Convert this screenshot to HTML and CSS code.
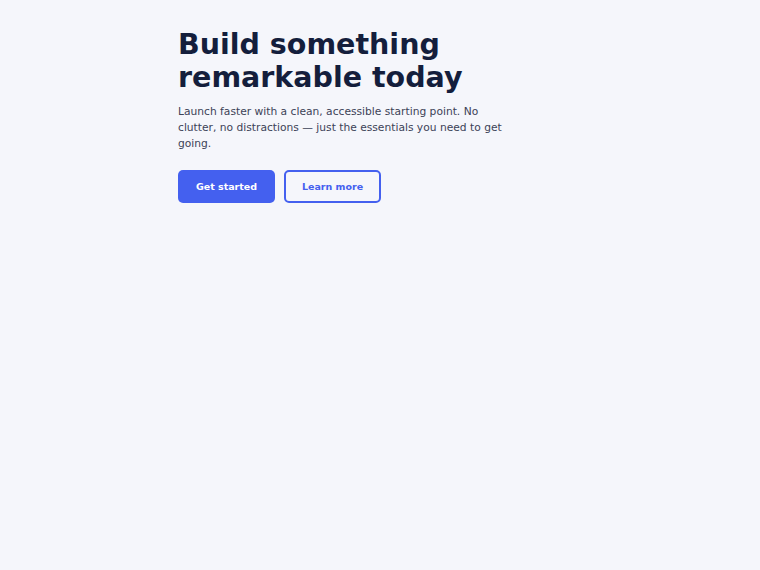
FILE: index.html
```html
<!DOCTYPE html>
<html lang="en">
<head>
  <meta charset="UTF-8" />
  <meta name="viewport" content="width=device-width, initial-scale=1.0"/>
  <title>Build something remarkable</title>
  <link rel="stylesheet" href="styles.css">
</head>
<body>

  <section class="hero">
    <h1>Build something remarkable today</h1>
    <p>Launch faster with a clean, accessible starting point. No clutter, no distractions — just the essentials you need to get going.</p>

    <div class="actions">
      <a href="#" class="btn btn-primary">Get started</a>
      <a href="#" class="btn btn-outline">Learn more</a>
    </div>
  </section>

</body>
</html>
```

FILE: styles.css
```css
* {
  box-sizing: border-box;
}

body {
  font-family: 'DejaVu Sans', sans-serif;
  background: #f5f6fb;
  margin: 0;
  min-height: 100vh;
}

.hero {
  width: 404px;
  margin: 0 auto;
  padding-top: 28px;
}

h1 {
  margin: 0;
  font-size: 28.5px;
  line-height: 33px;
  color: #141e3c;
}

.hero p {
  margin: 10px 0 0;
  max-width: 330px;
  font-size: 10.7px;
  line-height: 16px;
  color: #3c4257;
}

.actions {
  display: flex;
  gap: 9px;
  margin-top: 18px;
}

.btn {
  display: inline-flex;
  align-items: center;
  justify-content: center;
  width: 97px;
  height: 33px;
  border-radius: 5px;
  font-size: 9.5px;
  font-weight: bold;
  text-decoration: none;
}

.btn-primary {
  background: #4460ef;
  color: #fff;
}

.btn-outline {
  border: 2px solid #4460ef;
  color: #4460ef;
}
```
